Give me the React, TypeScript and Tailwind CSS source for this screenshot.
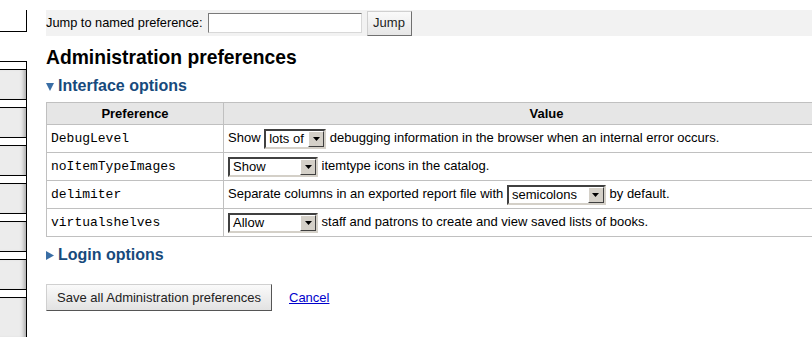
import React from "react";

type SelectProps = {
  value: string;
  width: string;
};

const FakeSelect = ({ value, width }: SelectProps) => {
  return (
    <span
      className={`inline-flex items-center h-[20px] ${width} border-2 border-t-[#404040] border-l-[#404040] border-r-[#d4d0c8] border-b-[#d4d0c8] bg-white align-middle`}
    >
      <span className="flex-1 pl-[3px] text-[13px] leading-[16px] text-black truncate">{value}</span>
      <span className="flex items-center justify-center w-[16px] h-[16px] bg-[#d4d0c8] border border-t-white border-l-white border-r-[#404040] border-b-[#404040]">
        <svg width="7" height="4" viewBox="0 0 7 4">
          <path d="M0 0h7L3.5 4z" fill="#000" />
        </svg>
      </span>
    </span>
  );
};

const prefs = [
  {
    name: "DebugLevel",
    value: (
      <>
        Show <FakeSelect value="lots of" width="w-[62px]" /> debugging information in the browser when an internal error occurs.
      </>
    ),
  },
  {
    name: "noItemTypeImages",
    value: (
      <>
        <FakeSelect value="Show" width="w-[90px]" /> itemtype icons in the catalog.
      </>
    ),
  },
  {
    name: "delimiter",
    value: (
      <>
        Separate columns in an exported report file with <FakeSelect value="semicolons" width="w-[99px]" /> by default.
      </>
    ),
  },
  {
    name: "virtualshelves",
    value: (
      <>
        <FakeSelect value="Allow" width="w-[90px]" /> staff and patrons to create and view saved lists of books.
      </>
    ),
  },
];

const App = () => {
  return (
    <div className="flex w-[812px] h-[337px] overflow-hidden bg-white font-['Liberation_Sans',Arial,sans-serif] text-[13px] text-black">
      {/* left tab column, cut off by the window */}
      <div className="w-[27px] shrink-0 flex flex-col">
        <div className="mt-[10px] h-[22px] border-r border-b border-black" />
        <div className="mt-[29px] flex-1 flex flex-col border-r border-black">
          {[0, 1, 2, 3, 4, 5, 6].map((i) => (
            <React.Fragment key={i}>
              <div className="h-[8px] shrink-0 border-t border-black bg-white" />
              <div className="h-[30px] shrink-0 border-t border-black bg-[#ececec] shadow-[inset_-5px_0_4px_-3px_rgba(0,0,0,0.3)] last:flex-1" />
            </React.Fragment>
          ))}
        </div>
      </div>

      <div className="ml-[19px] w-[824px] shrink-0">
        <div className="mt-[10px] h-[26px] bg-[#f2f2f2] flex items-center">
          <span className="text-[12.8px]">Jump to named preference:</span>
          <span className="ml-[5px] w-[154px] h-[20px] bg-white border border-t-[#7a7a7a] border-l-[#7a7a7a] border-r-[#d8d8d8] border-b-[#d8d8d8]" />
          <button className="ml-[5px] h-[25px] w-[45px] bg-gradient-to-b from-[#fafafa] to-[#e6e6e6] border border-t-[#d0d0d0] border-l-[#d0d0d0] border-r-[#707070] border-b-[#707070] text-[13px] text-[#222]">
            Jump
          </button>
        </div>

        <h1 className="mt-[10px] text-[19.3px] leading-[24px] font-bold">Administration preferences</h1>

        <h2 className="mt-[6px] flex items-center text-[16px] leading-[20px] font-bold text-[#174a7c]">
          <svg width="8" height="9" viewBox="0 0 8 9" className="mr-[4px]">
            <path d="M0 1h8L4 9z" fill="#3a6ea5" />
          </svg>
          Interface options
        </h2>

        <table className="mt-[6px] w-full border-collapse border border-[#c0c0c0]">
          <thead>
            <tr className="bg-[#e6e6e6] h-[22px]">
              <th className="w-[177px] border border-[#c0c0c0] font-bold text-[13px] text-center">Preference</th>
              <th className="border border-[#c0c0c0] font-bold text-[13px] text-center">Value</th>
            </tr>
          </thead>
          <tbody>
            {prefs.map((p) => (
              <tr key={p.name} className="h-[28px]">
                <td className="border border-[#c0c0c0] px-[4px] font-['Liberation_Mono',monospace] text-[13px]">{p.name}</td>
                <td className="border border-[#c0c0c0] px-[4px] text-[13px]">{p.value}</td>
              </tr>
            ))}
          </tbody>
        </table>

        <h2 className="mt-[8px] flex items-center text-[16px] leading-[20px] font-bold text-[#174a7c]">
          <svg width="8" height="9" viewBox="0 0 8 9" className="mr-[4px]">
            <path d="M0 0v9l8-4.5z" fill="#3a6ea5" />
          </svg>
          Login options
        </h2>

        <div className="mt-[19px] flex items-center">
          <button className="h-[27px] w-[226px] bg-gradient-to-b from-[#fafafa] to-[#e2e2e2] border border-t-[#d0d0d0] border-l-[#d0d0d0] border-r-[#555] border-b-[#555] text-[13px] text-[#222]">
            Save all Administration preferences
          </button>
          <a href="#" className="ml-[17px] text-[13px] text-[#0000cc] underline">
            Cancel
          </a>
        </div>
      </div>
    </div>
  );
};

export default App;
